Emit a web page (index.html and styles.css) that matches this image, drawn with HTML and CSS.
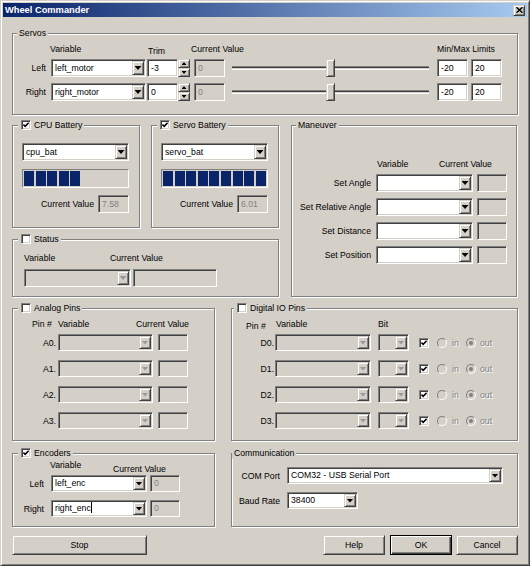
FILE: index.html
```html
<!DOCTYPE html>
<html lang="en">
<head>
<meta charset="UTF-8">
<title>Wheel Commander</title>
<link rel="stylesheet" href="styles.css">
</head>
<body>
<div class="window">
  <div class="titlebar">
    <span class="title">Wheel Commander</span>
    <span class="close raised"><svg width="7" height="6" viewBox="0 0 7 6"><path d="M0.5 0.3l6 5.4M6.5 0.3l-6 5.4" stroke="#000" stroke-width="1.5"/></svg></span>
  </div>
  <div class="client">

    <div class="group servos">
      <span class="legend">Servos</span>
      <div class="servo-head">
        <span class="h-var">Variable</span>
        <span class="h-trim">Trim</span>
        <span class="h-cur">Current Value</span>
        <span>Min/Max Limits</span>
      </div>
      <div class="servo-row">
        <span class="lbl">Left</span>
        <div class="combo sunken motor"><span class="val">left_motor</span><span class="drop raised"></span></div>
        <div class="edit sunken trim">-3</div>
        <div class="spin"><span class="raised up"></span><span class="raised down"></span></div>
        <div class="edit sunken dis cur">0</div>
        <div class="slider"><span class="thumb raised"></span></div>
        <div class="edit sunken lim-min">-20</div>
        <div class="edit sunken lim-max">20</div>
      </div>
      <div class="servo-row">
        <span class="lbl">Right</span>
        <div class="combo sunken motor"><span class="val">right_motor</span><span class="drop raised"></span></div>
        <div class="edit sunken trim">0</div>
        <div class="spin"><span class="raised up"></span><span class="raised down"></span></div>
        <div class="edit sunken dis cur">0</div>
        <div class="slider"><span class="thumb raised"></span></div>
        <div class="edit sunken lim-min">-20</div>
        <div class="edit sunken lim-max">20</div>
      </div>
    </div>

    <div class="row2">
      <div class="leftcol">
        <div class="batteries">
          <div class="group battery">
            <span class="legend cb"><span class="chk sunken"><svg viewBox="0 0 6 6"><path d="M0.4 2.6l1.8 1.8 3.4-3.6" fill="none" stroke="#000" stroke-width="1.6"/></svg></span>CPU Battery</span>
            <div class="combo sunken"><span class="val">cpu_bat</span><span class="drop raised"></span></div>
            <div class="progress">
              <i></i><i></i><i></i><i></i><i></i>
            </div>
            <div class="curval"><span>Current Value</span><div class="edit sunken dis">7.58</div></div>
          </div>
          <div class="group battery">
            <span class="legend cb"><span class="chk sunken"><svg viewBox="0 0 6 6"><path d="M0.4 2.6l1.8 1.8 3.4-3.6" fill="none" stroke="#000" stroke-width="1.6"/></svg></span>Servo Battery</span>
            <div class="combo sunken"><span class="val">servo_bat</span><span class="drop raised"></span></div>
            <div class="progress">
              <i></i><i></i><i></i><i></i><i></i><i></i><i></i><i></i><i></i><i></i>
            </div>
            <div class="curval"><span>Current Value</span><div class="edit sunken dis">6.01</div></div>
          </div>
        </div>
        <div class="group status">
          <span class="legend cb"><span class="chk sunken"></span>Status</span>
          <div class="head"><span class="h-first">Variable</span><span>Current Value</span></div>
          <div class="row">
            <div class="combo sunken dis"><span class="val"></span><span class="drop raised"></span></div>
            <div class="edit sunken dis"></div>
          </div>
        </div>
      </div>

      <div class="group maneuver">
        <span class="legend">Maneuver</span>
        <div class="head"><span class="h-first">Variable</span><span>Current Value</span></div>
        <div class="man-row">
          <span class="lbl">Set Angle</span>
          <div class="combo sunken"><span class="val"></span><span class="drop raised"></span></div>
          <div class="edit sunken dis"></div>
        </div>
        <div class="man-row">
          <span class="lbl">Set Relative Angle</span>
          <div class="combo sunken"><span class="val"></span><span class="drop raised"></span></div>
          <div class="edit sunken dis"></div>
        </div>
        <div class="man-row">
          <span class="lbl">Set Distance</span>
          <div class="combo sunken"><span class="val"></span><span class="drop raised"></span></div>
          <div class="edit sunken dis"></div>
        </div>
        <div class="man-row">
          <span class="lbl">Set Position</span>
          <div class="combo sunken"><span class="val"></span><span class="drop raised"></span></div>
          <div class="edit sunken dis"></div>
        </div>
      </div>
    </div>

    <div class="row3">
      <div class="group analog">
        <span class="legend cb"><span class="chk sunken"></span>Analog Pins</span>
        <div class="head"><span class="h-pin">Pin #</span><span class="h-var">Variable</span><span>Current Value</span></div>
        <div class="pin-row">
          <span class="lbl">A0.</span>
          <div class="combo sunken dis sm"><span class="val"></span><span class="drop raised"></span></div>
          <div class="edit sunken dis sm"></div>
        </div>
        <div class="pin-row">
          <span class="lbl">A1.</span>
          <div class="combo sunken dis sm"><span class="val"></span><span class="drop raised"></span></div>
          <div class="edit sunken dis sm"></div>
        </div>
        <div class="pin-row">
          <span class="lbl">A2.</span>
          <div class="combo sunken dis sm"><span class="val"></span><span class="drop raised"></span></div>
          <div class="edit sunken dis sm"></div>
        </div>
        <div class="pin-row">
          <span class="lbl">A3.</span>
          <div class="combo sunken dis sm"><span class="val"></span><span class="drop raised"></span></div>
          <div class="edit sunken dis sm"></div>
        </div>
      </div>

      <div class="group digital">
        <span class="legend cb"><span class="chk sunken"></span>Digital IO Pins</span>
        <div class="head"><span class="h-pin">Pin #</span><span class="h-var">Variable</span><span>Bit</span></div>
        <div class="pin-row">
          <span class="lbl">D0.</span>
          <div class="combo sunken dis sm var"><span class="val"></span><span class="drop raised"></span></div>
          <div class="combo sunken dis sm bit"><span class="val"></span><span class="drop raised"></span></div>
          <span class="chk sunken"><svg viewBox="0 0 6 6"><path d="M0.4 2.6l1.8 1.8 3.4-3.6" fill="none" stroke="#000" stroke-width="1.6"/></svg></span>
          <span class="opt in"><span class="radio"></span><span class="dtext">in</span></span>
          <span class="opt"><span class="radio on"></span><span class="dtext">out</span></span>
        </div>
        <div class="pin-row">
          <span class="lbl">D1.</span>
          <div class="combo sunken dis sm var"><span class="val"></span><span class="drop raised"></span></div>
          <div class="combo sunken dis sm bit"><span class="val"></span><span class="drop raised"></span></div>
          <span class="chk sunken"><svg viewBox="0 0 6 6"><path d="M0.4 2.6l1.8 1.8 3.4-3.6" fill="none" stroke="#000" stroke-width="1.6"/></svg></span>
          <span class="opt in"><span class="radio"></span><span class="dtext">in</span></span>
          <span class="opt"><span class="radio on"></span><span class="dtext">out</span></span>
        </div>
        <div class="pin-row">
          <span class="lbl">D2.</span>
          <div class="combo sunken dis sm var"><span class="val"></span><span class="drop raised"></span></div>
          <div class="combo sunken dis sm bit"><span class="val"></span><span class="drop raised"></span></div>
          <span class="chk sunken"><svg viewBox="0 0 6 6"><path d="M0.4 2.6l1.8 1.8 3.4-3.6" fill="none" stroke="#000" stroke-width="1.6"/></svg></span>
          <span class="opt in"><span class="radio"></span><span class="dtext">in</span></span>
          <span class="opt"><span class="radio on"></span><span class="dtext">out</span></span>
        </div>
        <div class="pin-row">
          <span class="lbl">D3.</span>
          <div class="combo sunken dis sm var"><span class="val"></span><span class="drop raised"></span></div>
          <div class="combo sunken dis sm bit"><span class="val"></span><span class="drop raised"></span></div>
          <span class="chk sunken"><svg viewBox="0 0 6 6"><path d="M0.4 2.6l1.8 1.8 3.4-3.6" fill="none" stroke="#000" stroke-width="1.6"/></svg></span>
          <span class="opt in"><span class="radio"></span><span class="dtext">in</span></span>
          <span class="opt"><span class="radio on"></span><span class="dtext">out</span></span>
        </div>
      </div>
    </div>

    <div class="row4">
      <div class="group encoders">
        <span class="legend cb"><span class="chk sunken"><svg viewBox="0 0 6 6"><path d="M0.4 2.6l1.8 1.8 3.4-3.6" fill="none" stroke="#000" stroke-width="1.6"/></svg></span>Encoders</span>
        <div class="head"><span class="h-first">Variable</span><span class="h-low">Current Value</span></div>
        <div class="enc-row">
          <span class="lbl">Left</span>
          <div class="combo sunken sm"><span class="val">left_enc</span><span class="drop raised"></span></div>
          <div class="edit sunken dis sm">0</div>
        </div>
        <div class="enc-row">
          <span class="lbl">Right</span>
          <div class="combo sunken sm"><span class="val">right_enc<span class="caret"></span></span><span class="drop raised"></span></div>
          <div class="edit sunken dis sm">0</div>
        </div>
      </div>

      <div class="group comm">
        <span class="legend">Communication</span>
        <div class="comm-row">
          <span class="lbl">COM Port</span>
          <div class="combo sunken sm com"><span class="val">COM32 - USB Serial Port</span><span class="drop raised"></span></div>
        </div>
        <div class="comm-row">
          <span class="lbl">Baud Rate</span>
          <div class="combo sunken sm baud"><span class="val">38400</span><span class="drop raised"></span></div>
        </div>
      </div>
    </div>

    <div class="buttons">
      <span class="btn raised stop">Stop</span>
      <span class="btn raised help">Help</span>
      <span class="btn default ok">OK</span>
      <span class="btn raised cancel">Cancel</span>
    </div>

  </div>
</div>
</body>
</html>
```

FILE: styles.css
```css
* {
    box-sizing: border-box;
}

body {
    margin: 0;
    font-family: "Liberation Sans", Arial, sans-serif;
    font-size: 8.7px;
    color: #000;
    background: #D4D0C8;
}

/* classic 3d edges */
.raised {
    background: #D4D0C8;
    border: 1px solid;
    border-color: #D4D0C8 #404040 #404040 #D4D0C8;
    box-shadow: inset 1px 1px #fff, inset -1px -1px #808080;
}

.sunken {
    border: 1px solid;
    border-color: #808080 #fff #fff #808080;
    box-shadow: inset 1px 1px #404040, inset -1px -1px #D4D0C8;
}

.window {
    width: 530px;
    height: 566px;
    border: 1px solid;
    border-color: #D4D0C8 #404040 #404040 #D4D0C8;
    box-shadow: inset 1px 1px #fff, inset -1px -1px #808080;
    padding: 2px;
    background: #D4D0C8;
}

.titlebar {
    height: 14px;
    display: flex;
    align-items: center;
    justify-content: space-between;
    padding: 0 2px;
    background: linear-gradient(to right, #0A246A, #A6CAF0);
}

.title {
    color: #fff;
    font-weight: bold;
    font-size: 9.3px;
}

.close {
    width: 12px;
    height: 11px;
    display: flex;
    align-items: center;
    justify-content: center;
}

.close svg {
    display: block;
}

.client {
    padding: 16px 9px 0;
    display: flex;
    flex-direction: column;
}

/* group boxes */
.group {
    position: relative;
    border: 1px solid #808080;
    box-shadow: 1px 1px 0 #fff, inset 1px 1px 0 #fff;
}

.legend {
    position: absolute;
    top: -7px;
    left: 4px;
    height: 12px;
    line-height: 12px;
    padding: 0 2px;
    display: flex;
    align-items: center;
    background: #D4D0C8;
    white-space: nowrap;
}

.legend.cb {
    left: 5px;
    padding: 0 2px 0 3px;
    gap: 3px;
}

.head {
    display: flex;
    height: 12px;
    line-height: 12px;
    white-space: nowrap;
}

.lbl {
    text-align: right;
    white-space: nowrap;
}

/* controls */
.combo {
    display: flex;
    height: 18px;
    padding: 1px;
    background: #fff;
}

.combo .val {
    flex: 1;
    padding-left: 2px;
    line-height: 14px;
    white-space: nowrap;
    overflow: hidden;
}

.combo .drop {
    flex: none;
    width: 12px;
    display: flex;
    align-items: center;
    justify-content: center;
}

.combo .drop::after {
    content: "";
    width: 7px;
    height: 4px;
    background: #000;
    clip-path: polygon(0 0, 100% 0, 50% 100%);
}

.combo.dis {
    background: #D4D0C8;
}

.combo.dis .drop::after {
    background: #9a9a9a;
}

.edit {
    height: 18px;
    padding: 1px 1px 1px 3px;
    line-height: 14px;
    background: #fff;
    white-space: nowrap;
}

.edit.dis {
    background: #D4D0C8;
    color: #808080;
}

.combo.sm,
.edit.sm {
    height: 17px;
}

.combo.sm .val,
.edit.sm {
    line-height: 13px;
}

.caret {
    display: inline-block;
    width: 1px;
    height: 11px;
    background: #000;
    vertical-align: -2px;
}

.chk {
    flex: none;
    width: 10px;
    height: 10px;
    padding: 1px;
    background: #fff;
    display: flex;
}

.chk svg {
    display: block;
    width: 6px;
    height: 6px;
}

.radio {
    flex: none;
    width: 10px;
    height: 10px;
    border-radius: 50%;
    border: 1px solid;
    border-color: #808080 #fff #fff #808080;
    background: #D4D0C8;
    display: flex;
    align-items: center;
    justify-content: center;
}

.radio.on::after {
    content: "";
    width: 4px;
    height: 4px;
    border-radius: 50%;
    background: #808080;
}

.dtext {
    color: #808080;
    text-shadow: 1px 1px 0 #fff;
}

.spin {
    flex: none;
    width: 12px;
    height: 18px;
    display: flex;
    flex-direction: column;
}

.spin span {
    flex: 1;
    display: flex;
    align-items: center;
    justify-content: center;
}

.spin span::after {
    content: "";
    width: 5px;
    height: 3px;
    background: #000;
}

.spin .up::after {
    clip-path: polygon(50% 0, 100% 100%, 0 100%);
}

.spin .down::after {
    clip-path: polygon(0 0, 100% 0, 50% 100%);
}

.slider {
    height: 18px;
    display: flex;
    justify-content: center;
    background: linear-gradient(to bottom, transparent 7px, #808080 7px, #808080 8px, #404040 8px, #404040 9px, #D4D0C8 9px, #D4D0C8 10px, #fff 10px, #fff 11px, transparent 11px);
}

.thumb {
    width: 9px;
    height: 18px;
}

.progress {
    width: 107px;
    height: 19px;
    margin-top: 8px;
    border: 1px solid;
    border-color: #808080 #fff #fff #808080;
    padding: 1px;
    display: flex;
    gap: 1.6px;
    overflow: hidden;
}

.progress i {
    flex: none;
    width: 10px;
    background: #0A246A;
}

/* servos */
.servos {
    height: 82px;
    padding-top: 9px;
}

.servo-head {
    display: flex;
    height: 12px;
    line-height: 12px;
    padding-left: 37px;
    white-space: nowrap;
}

.servo-head .h-var { width: 98px; }
.servo-head .h-trim { width: 43px; margin-top: 2px; }
.servo-head .h-cur { width: 246px; }

.servo-row {
    display: flex;
    align-items: center;
    height: 18px;
    margin-top: 4px;
}

.servo-row + .servo-row {
    margin-top: 6px;
}

.servo-row .lbl { width: 33px; }
.servo-row .motor { width: 95px; margin-left: 5px; }
.servo-row .trim { width: 31px; margin-left: 1px; }
.servo-row .cur { width: 31px; margin-left: 4px; }
.servo-row .slider { width: 197px; margin-left: 7px; }
.servo-row .lim-min { width: 31px; margin-left: 8px; }
.servo-row .lim-max { width: 31px; margin-left: 3px; }

/* middle band */
.row2 {
    display: flex;
    height: 172px;
    margin-top: 10px;
}

.leftcol {
    width: 267px;
    display: flex;
    flex-direction: column;
}

.batteries {
    display: flex;
    gap: 11px;
    height: 103px;
}

.battery {
    width: 128px;
    padding: 17px 0 0 9px;
}

.battery .combo {
    width: 107px;
}

.curval {
    width: 107px;
    height: 18px;
    margin-top: 7px;
    display: flex;
    align-items: center;
    justify-content: flex-end;
}

.curval .edit {
    width: 31px;
    margin-left: 4px;
}

.status {
    height: 58px;
    margin-top: 11px;
    padding: 12px 0 0 11px;
}

.status .h-first { width: 86px; }

.status .row {
    display: flex;
    margin-top: 5px;
}

.status .combo { width: 107px; }
.status .edit { width: 84px; margin-left: 2px; }

.maneuver {
    width: 226px;
    margin-left: 12px;
    padding-top: 32px;
}

.maneuver .head { padding-left: 85px; }
.maneuver .h-first { width: 62px; }

.man-row {
    display: flex;
    align-items: center;
    height: 18px;
    margin-top: 6px;
}

.maneuver .head + .man-row { margin-top: 4px; }
.man-row .lbl { width: 79px; }
.man-row .combo { width: 97px; margin-left: 5px; }
.man-row .edit { width: 30px; margin-left: 4px; }

/* pins */
.row3 {
    display: flex;
    gap: 16px;
    height: 133px;
    margin-top: 11px;
}

.analog {
    width: 203px;
    padding-top: 9px;
}

.digital {
    width: 287px;
    padding-top: 9px;
}

.digital .legend.cb { left: 2px; }

.pin-row {
    display: flex;
    align-items: center;
    height: 17px;
    margin-top: 9px;
}

.head + .pin-row { margin-top: 4px; }

.analog .head { padding-left: 19px; }
.analog .h-pin { width: 26px; }
.analog .h-var { width: 78px; }
.analog .lbl { width: 43px; }
.analog .combo { width: 95px; margin-left: 2px; }
.analog .edit { width: 30px; margin-left: 5px; }

.digital .head { padding-left: 14px; }
.digital .h-pin { width: 30px; margin-top: 2px; }
.digital .h-var { width: 102px; }
.digital .lbl { width: 42px; }
.digital .var { width: 96px; margin-left: 1px; }
.digital .bit { width: 31px; margin-left: 7px; }
.digital .pin-row .chk { margin-left: 10px; }

.opt {
    display: flex;
    align-items: center;
}

.opt .dtext { margin-left: 4px; }
.opt.in { width: 29px; margin-left: 8px; }
.opt.in .dtext { margin-left: 5px; }

/* bottom band */
.row4 {
    display: flex;
    gap: 16px;
    height: 74px;
    margin-top: 12px;
}

.encoders {
    width: 203px;
    padding-top: 5px;
}

.encoders .head { padding-left: 37px; }
.encoders .h-first { width: 63px; }
.encoders .h-low { margin-top: 4px; }

.enc-row {
    display: flex;
    align-items: center;
    height: 17px;
    margin-top: 8px;
}

.encoders .head + .enc-row { margin-top: 4px; }
.enc-row .lbl { width: 31px; }
.enc-row .combo { width: 96px; margin-left: 7px; }
.enc-row .edit { width: 30px; margin-left: 3px; }

.comm {
    width: 287px;
    padding-top: 13px;
}

.comm .legend { left: 0; }

.comm-row {
    display: flex;
    align-items: center;
    height: 17px;
}

.comm-row + .comm-row { margin-top: 8px; }
.comm-row .lbl { width: 48px; }
.comm-row .combo { margin-left: 7px; }
.comm-row .com { width: 216px; }
.comm-row .baud { width: 71px; }

/* buttons */
.buttons {
    display: flex;
    height: 20px;
    margin-top: 8px;
}

.btn {
    width: 62px;
    height: 20px;
    display: flex;
    align-items: center;
    justify-content: center;
}

.btn.stop { width: 135px; }
.btn.help { margin-left: auto; }
.btn.ok { margin-left: 5px; }
.btn.cancel { margin-left: 4px; }

.btn.default {
    background: #D4D0C8;
    border: 1px solid #000;
    box-shadow: inset 1px 1px #fff, inset -1px -1px #404040, inset -2px -2px #808080;
}
```
